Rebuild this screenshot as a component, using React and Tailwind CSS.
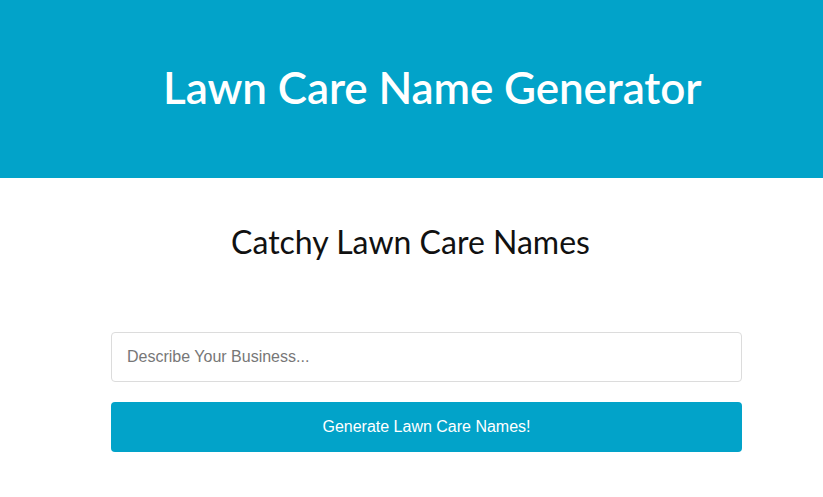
export default function App() {
  return (
    <div className="min-h-[497px] bg-white" style={{ fontFamily: "Lato, 'Open Sans', sans-serif" }}>
      <header className="h-[178px] bg-[#02a3c9] flex items-center">
        <h1 className="ml-[163px] text-[44px] leading-none font-semibold text-white tracking-[-0.1px] pb-1">
          Lawn Care Name Generator
        </h1>
      </header>

      <section className="pt-[48px]">
        <h2 className="text-center text-[32px] leading-none text-[#111] pr-[2px]">Catchy Lawn Care Names</h2>

        <div className="ml-[111px] w-[631px] mt-[74px] flex flex-col gap-[20px] font-['Liberation_Sans',Arial,sans-serif]">
          <input
            type="text"
            placeholder="Describe Your Business..."
            className="h-[50px] w-full rounded border border-[#dcdcdc] px-[15px] text-[16px] text-[#333] placeholder:text-[#777] outline-none"
          />
          <button className="h-[50px] w-full rounded bg-[#02a3c9] text-[16px] text-white">
            Generate Lawn Care Names!
          </button>
        </div>
      </section>
    </div>
  );
}
